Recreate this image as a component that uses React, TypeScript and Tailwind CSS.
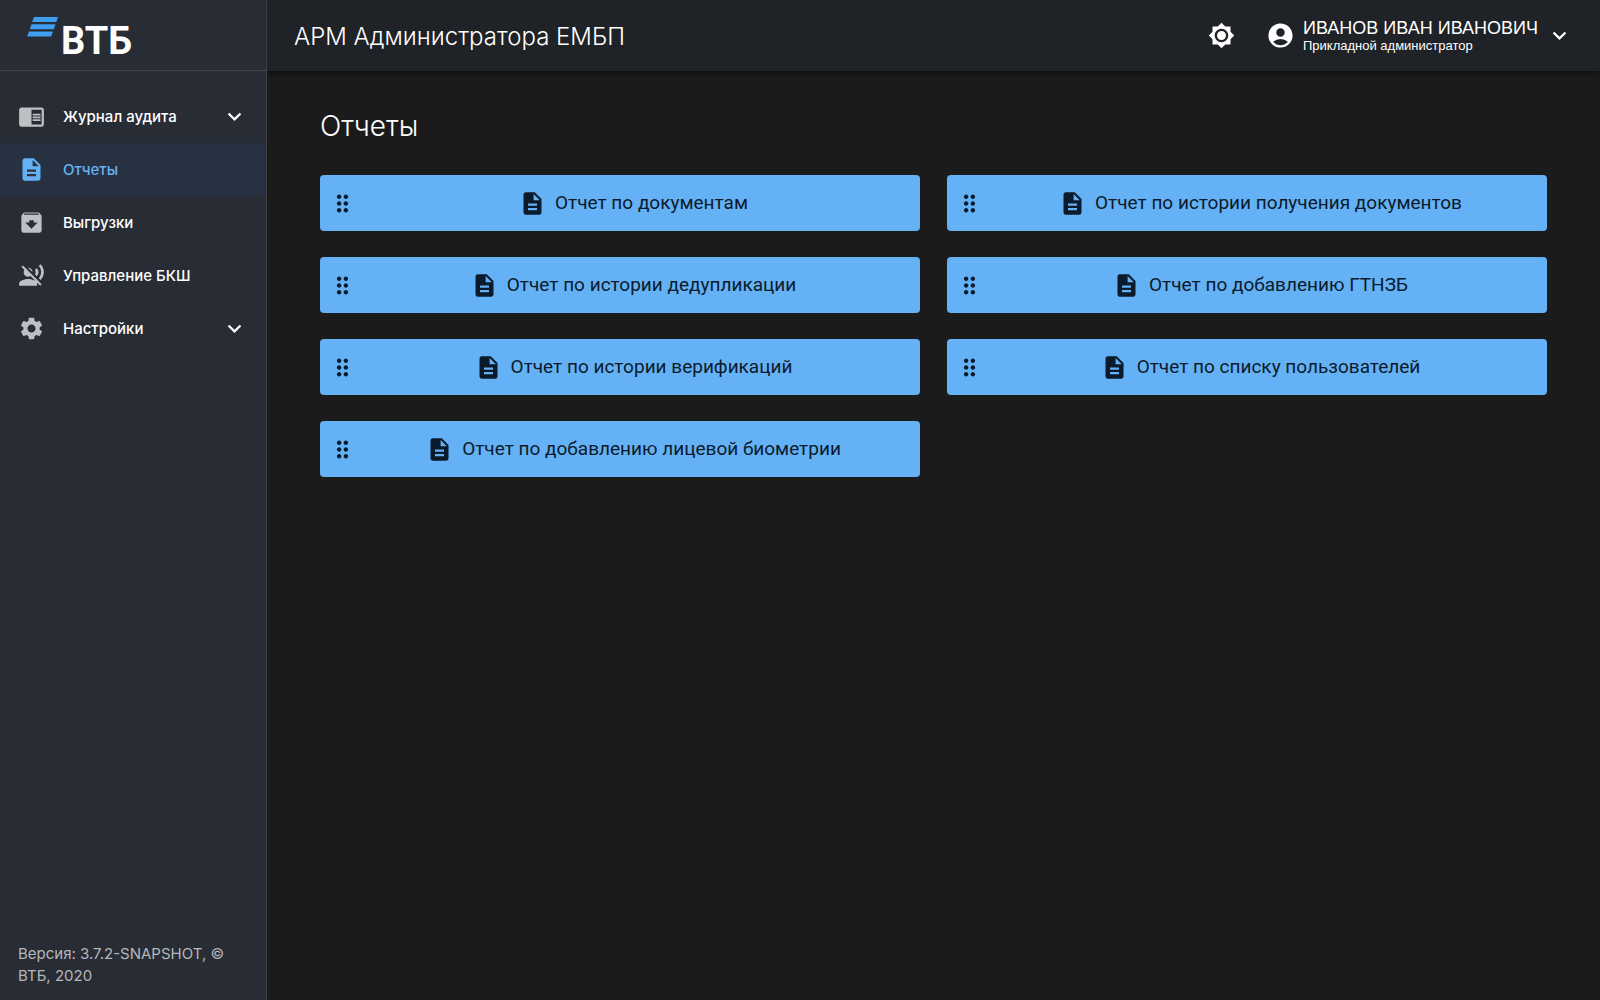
import {
  MdAccountCircle,
  MdArchive,
  MdBrightness7,
  MdChromeReaderMode,
  MdDescription,
  MdDragIndicator,
  MdExpandMore,
  MdSettings,
  MdVoiceOverOff,
} from "react-icons/md";
import type { IconType } from "react-icons";

type NavItem = { label: string; icon: IconType; active?: boolean; group?: boolean };

const navItems: NavItem[] = [
  { label: "Журнал аудита", icon: MdChromeReaderMode, group: true },
  { label: "Отчеты", icon: MdDescription, active: true },
  { label: "Выгрузки", icon: MdArchive },
  { label: "Управление БКШ", icon: MdVoiceOverOff },
  { label: "Настройки", icon: MdSettings, group: true },
];

const reports = [
  "Отчет по документам",
  "Отчет по истории получения документов",
  "Отчет по истории дедупликации",
  "Отчет по добавлению ГТНЗБ",
  "Отчет по истории верификаций",
  "Отчет по списку пользователей",
  "Отчет по добавлению лицевой биометрии",
];

function Logo() {
  return (
    <a href="#" aria-label="ВТБ" className="flex h-[71px] items-start border-b border-[#41454d] pl-[27px] pt-[17px]">
      <svg width="31" height="20" viewBox="0 0 31 20" fill="#3f9df2" aria-hidden="true">
        <path d="M7 0H31L29.3 5H5.2Z" />
        <path d="M4.6 7.3H28.6L26.8 12.3H2.8Z" />
        <path d="M2 14.6H26L24.2 19.6H0.2Z" />
      </svg>
      <span className="ml-[3px] font-[Roboto] text-[38px] leading-[48px] font-bold text-white">ВТБ</span>
    </a>
  );
}

function NavEntry({ label, icon: Icon, active, group }: NavItem) {
  const look = "flex h-[53px] w-full items-center px-[18px] text-left text-[15px] leading-6 font-medium ";
  const content = (
    <>
      <Icon size={27} className={active ? "text-[#64b1f5]" : "text-[#bfc0c3]"} />
      <span className="ml-[18px] flex-1">{label}</span>
      {group && <MdExpandMore size={27} />}
    </>
  );
  return (
    <li>
      {group ? (
        <button type="button" aria-expanded="false" className={look + "text-white"}>
          {content}
        </button>
      ) : (
        <a href="#" className={look + (active ? "bg-[#283142] text-[#64b1f5]" : "text-white")}>
          {content}
        </a>
      )}
    </li>
  );
}

export default function App() {
  return (
    <div className="flex min-h-screen bg-[#1b1b1b] font-[Inter,sans-serif]">
      <aside className="relative z-10 flex w-[267px] shrink-0 flex-col border-r border-[#3c3f45] bg-[#282c35]">
        <Logo />
        <nav className="mt-[19px]">
          <ul>
            {navItems.map((item) => (
              <NavEntry key={item.label} {...item} />
            ))}
          </ul>
        </nav>
        <p className="mt-auto px-[18px] pb-[13px] text-[15px] leading-[22px] text-[#b5b7bb]">
          Версия: 3.7.2-SNAPSHOT, © ВТБ, 2020
        </p>
      </aside>
      <div className="flex min-w-0 flex-1 flex-col">
        <header className="flex h-[71px] items-center bg-[#1f2226] px-[27px] text-white shadow-[0_2px_6px_rgba(0,0,0,0.5)]">
          <p className="flex-1 pt-[2px] text-2xl font-light">АРМ Администратора ЕМБП</p>
          <button type="button" aria-label="Сменить тему">
            <MdBrightness7 size={27} />
          </button>
          <button type="button" className="ml-[31px] flex items-center text-left font-['Liberation_Sans',sans-serif]">
            <MdAccountCircle size={29} />
            <span className="ml-2 flex flex-col">
              <span className="text-lg leading-5">ИВАНОВ ИВАН ИВАНОВИЧ</span>
              <span className="text-[13px] leading-4">Прикладной администратор</span>
            </span>
            <MdExpandMore size={27} className="ml-2" />
          </button>
        </header>
        <main className="px-[53px] pt-[35px]">
          <h1 className="text-[28px] leading-10 font-light text-white">Отчеты</h1>
          <ul className="mt-[29px] grid grid-cols-2 gap-x-[27px] gap-y-[26px]">
            {reports.map((title) => (
              <li key={title}>
                <button
                  type="button"
                  className="flex h-14 w-full items-center rounded bg-[#64b1f5] px-[9px] font-[Roboto,sans-serif] text-[19px] text-[#0b1b2b]"
                >
                  <MdDragIndicator size={27} className="shrink-0" />
                  <span className="flex flex-1 items-center justify-center gap-[9px]">
                    <MdDescription size={27} />
                    {title}
                  </span>
                </button>
              </li>
            ))}
          </ul>
        </main>
      </div>
    </div>
  );
}
